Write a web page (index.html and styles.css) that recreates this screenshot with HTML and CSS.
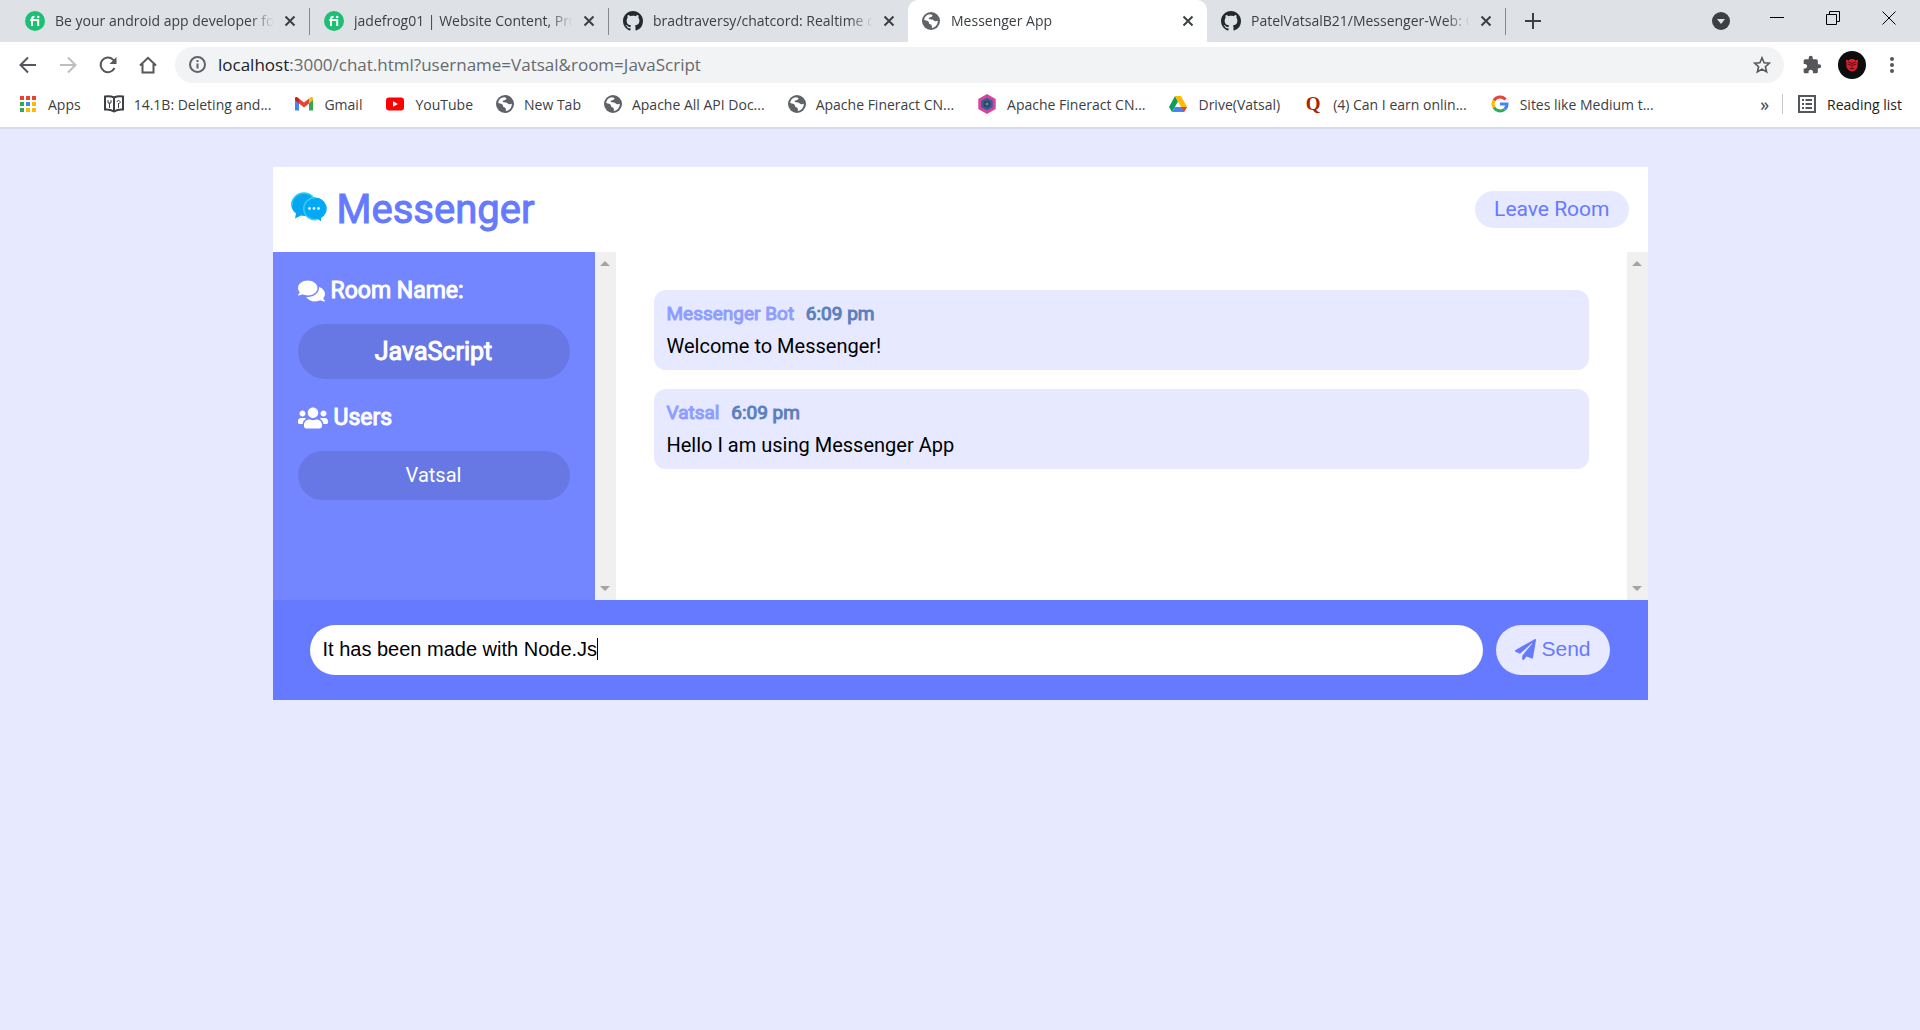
FILE: index.html
```html
<!DOCTYPE html>
<html lang="en">
<head>
<meta charset="utf-8">
<meta name="viewport" content="width=device-width, initial-scale=1">
<title>Messenger App</title>
<link rel="stylesheet" href="styles.css">
</head>
<body>
<svg class="sprite" aria-hidden="true">
  <symbol id="x" viewBox="0 0 12 12"><path d="M1.5 1.5l9 9M10.5 1.5l-9 9" fill="none" stroke="#3c4043" stroke-width="2"/></symbol>
  <symbol id="fiverr" viewBox="0 0 20 20"><circle cx="10" cy="10" r="10" fill="#1dbf73"/><path d="M7 15V8.200Q7 5.800 9.500 5.800M5.200 9h8V15" fill="none" stroke="#fff" stroke-width="2"/><circle cx="13.200" cy="6" r="1.300" fill="#fff"/></symbol>
  <symbol id="github" viewBox="0 0 16 16"><path fill="#24292e" d="M8 0C3.580 0 0 3.580 0 8c0 3.540 2.290 6.530 5.470 7.590.4.070.55-.17.55-.38 0-.19-.01-.82-.01-1.490-2.010.37-2.530-.49-2.690-.94-.09-.23-.48-.94-.82-1.130-.28-.15-.68-.52-.01-.53.63-.01 1.080.58 1.230.82.72 1.210 1.870.87 2.330.66.07-.52.28-.87.51-1.070-1.780-.2-3.640-.89-3.640-3.950 0-.87.31-1.590.82-2.150-.08-.2-.36-1.020.08-2.120 0 0 .67-.21 2.200.82.64-.18 1.320-.27 2-.27s1.360.09 2 .27c1.530-1.040 2.200-.82 2.200-.82.44 1.100.16 1.920.08 2.120.51.56.82 1.270.82 2.150 0 3.070-1.870 3.750-3.650 3.950.29.25.54.73.54 1.480 0 1.070-.01 1.930-.01 2.200 0 .21.15.46.55.38A8.010 8.010 0 0016 8c0-4.420-3.580-8-8-8z"/></symbol>
  <symbol id="globe" viewBox="0 0 18 18"><circle cx="9" cy="9" r="9" fill="#5f6368"/><path d="M8 2.200c3 .3 3 1.800 1.500 2.600-1.400.8-2.800.3-2.800 1.700 0 1.200 2.600.5 3.900 1.200 1.700.9 2.400 2.300 5.200 1.100C15.900 13 13 15.800 9.800 16c.3-1.400.2-3.200-1.500-3.700-1.900-.4-.8-2-2.200-3C4.900 8.500 3 9 2.100 7.600 2.800 4.400 5 2.300 8 2.200z" fill="#fff"/></symbol>
</svg>

<header class="browser">
  <div class="tabs">
    <div class="tab"><svg class="fav"><use href="#fiverr"/></svg><span class="title">Be your android app developer fo</span><button class="close" aria-label="Close tab"><svg><use href="#x"/></svg></button></div>
    <div class="tab"><svg class="fav"><use href="#fiverr"/></svg><span class="title">jadefrog01 | Website Content, Pro</span><button class="close" aria-label="Close tab"><svg><use href="#x"/></svg></button></div>
    <div class="tab plain"><svg class="fav"><use href="#github"/></svg><span class="title">bradtraversy/chatcord: Realtime c</span><button class="close" aria-label="Close tab"><svg><use href="#x"/></svg></button></div>
    <div class="tab active"><svg class="fav small"><use href="#globe"/></svg><span class="title">Messenger App</span><button class="close" aria-label="Close tab"><svg><use href="#x"/></svg></button></div>
    <div class="tab"><svg class="fav"><use href="#github"/></svg><span class="title">PatelVatsalB21/Messenger-Web: C</span><button class="close" aria-label="Close tab"><svg><use href="#x"/></svg></button></div>
    <button class="newtab" aria-label="New tab"><svg viewBox="0 0 16 16"><path d="M8 0v16M0 8h16" stroke="#3c4043" stroke-width="2"/></svg></button>
    <div class="window">
      <button aria-label="Search tabs"><svg viewBox="0 0 18 18"><circle cx="9" cy="9" r="9" fill="#3c4043"/><path d="M5 7h8l-4 5z" fill="#dee1e6"/></svg></button>
      <button class="sys" aria-label="Minimize"><svg viewBox="0 0 14 14"><path d="M0 6.500h14" stroke="#000"/></svg></button>
      <button class="sys" aria-label="Restore"><svg viewBox="0 0 14 14"><path d="M.5 3.500h10v10H.5zM3.500 3V.5h10v10H11" fill="none" stroke="#000"/></svg></button>
      <button class="sys" aria-label="Close"><svg viewBox="0 0 14 14"><path d="M.5.5l13 13M13.500.5l-13 13" stroke="#000"/></svg></button>
    </div>
  </div>

  <div class="toolbar">
    <button aria-label="Back"><svg viewBox="0 0 18 18"><path d="M17 9H2M9 1.500L1.500 9 9 16.500" fill="none" stroke="#54575b" stroke-width="2"/></svg></button>
    <button aria-label="Forward"><svg viewBox="0 0 18 18"><path d="M1 9h15M9 1.500L16.500 9 9 16.500" fill="none" stroke="#bbbdc0" stroke-width="2"/></svg></button>
    <button aria-label="Reload"><svg viewBox="0 0 18 18"><path d="M15.500 12A7.300 7.300 0 1 1 14 3.600L16 5.600" fill="none" stroke="#54575b" stroke-width="2"/><path d="M17.500 1v7h-7z" fill="#54575b"/></svg></button>
    <button aria-label="Home"><svg viewBox="0 0 18 18"><path d="M1 9.500L9 1.800l8 7.700M3.500 8v8.500h11V8" fill="none" stroke="#54575b" stroke-width="2"/></svg></button>
    <div class="omnibox">
      <svg class="info" viewBox="0 0 17 17"><circle cx="8.500" cy="8.500" r="7.500" fill="none" stroke="#5f6368" stroke-width="2"/><path d="M8.500 7.500v5M8.500 4v2" stroke="#5f6368" stroke-width="2"/></svg>
      <div class="url">localhost<span>:3000/chat.html?username=Vatsal&amp;room=JavaScript</span></div>
      <button aria-label="Bookmark this page"><svg viewBox="0 0 18 18"><path d="M9 1.800l2.100 4.900 5.300.5-4 3.500 1.200 5.200L9 13.100l-4.600 2.800 1.200-5.200-4-3.500 5.300-.5z" fill="none" stroke="#54575b" stroke-width="1.600"/></svg></button>
    </div>
    <div class="right">
      <button aria-label="Extensions"><svg viewBox="0 0 24 24"><path d="M20.500 11H19V7c0-1.100-.9-2-2-2h-4V3.500a2.500 2.500 0 00-5 0V5H4c-1.100 0-1.990.9-1.990 2v3.800H3.500c1.490 0 2.700 1.210 2.700 2.700s-1.210 2.700-2.700 2.700H2V20c0 1.100.9 2 2 2h3.800v-1.500c0-1.490 1.210-2.700 2.700-2.700s2.700 1.210 2.700 2.700V22H17c1.100 0 2-.9 2-2v-4h1.500a2.500 2.500 0 000-5z" fill="#54575b"/></svg></button>
      <button class="avatar" aria-label="Profile"><svg viewBox="0 0 28 28"><circle cx="14" cy="14" r="14" fill="#0d0d10"/><path d="M8 8.500l2.500 1L12.500 8h3l2 1.500 2.500-1-.5 8-2.500 3L14 20.500 11 19.500 8.500 16.500z" fill="#d91f2b"/><path d="M9.500 13l3.500 1.200M18.500 13L15 14.200M12 17.500h4M10 11l4 1.500 4-1.500M14 12.500v4" fill="none" stroke="#4d0d12" stroke-width=".9"/></svg></button>
      <button class="menu" aria-label="Menu"><svg viewBox="0 0 4 16"><circle cx="2" cy="2" r="2"/><circle cx="2" cy="8" r="2"/><circle cx="2" cy="14" r="2"/></svg></button>
    </div>
  </div>

  <nav class="bookmarks">
    <a href="#"><svg viewBox="0 0 20 20"><path d="M2 2h4v4H2zM8 2h4v4H8zM14 2h4v4h-4z" fill="#ea4335"/><path d="M2 8h4v4H2zM2 14h4v4H2z" fill="#34a853"/><path d="M8 8h4v4H8z" fill="#4285f4"/><path d="M14 8h4v4h-4zM8 14h4v4H8zM14 14h4v4h-4z" fill="#fbbc04"/></svg>Apps</a>
    <a href="#"><svg viewBox="0 0 20 20"><path d="M1 2.500q5-1 9 1Q14 1.500 19 2.500v13q-5-.5-9 2-4-2.500-9-2zM10 4v14" fill="#fff" stroke="#3c4043" stroke-width="2"/><path d="M5.500 14V9M4 6v3h3V6M14.500 14V9m-1.500-1a1.600 1.600 0 112.500 1.500" fill="none" stroke="#3c4043"/></svg>14.1B: Deleting and...</a>
    <a href="#"><svg viewBox="0 0 20 20"><path d="M1 5v11.500h4V9z" fill="#4285f4"/><path d="M19 5v11.500h-4V9z" fill="#34a853"/><path d="M5 4.500l5 4 5-4V9.500l-5 4-5-4z" fill="#ea4335"/><path d="M1 6V4.500c0-2 2-2 4 0v5z" fill="#c5221f"/><path d="M19 6V4.500c0-2-2-2-4 0v5z" fill="#fbbc04"/></svg>Gmail</a>
    <a href="#"><svg viewBox="0 0 20 20"><rect x="1" y="3.500" width="18" height="13" rx="3" fill="#f00"/><path d="M8 7.200v5.600l5-2.800z" fill="#fff"/></svg>YouTube</a>
    <a href="#"><svg class="g"><use href="#globe"/></svg>New Tab</a>
    <a href="#"><svg class="g"><use href="#globe"/></svg>Apache All API Doc...</a>
    <a href="#"><svg class="g"><use href="#globe"/></svg>Apache Fineract CN...</a>
    <a href="#"><svg viewBox="0 0 20 20"><path d="M10 0l8.700 5v10L10 20l-8.700-5V5z" fill="#d6459b"/><path d="M10 3.500l5.700 3.200v6.600L10 16.500l-5.700-3.200V6.700z" fill="#3d5a93"/><circle cx="10" cy="10" r="3.500" fill="#22477a"/><circle cx="10" cy="10" r="1.500" fill="#7d8a4d"/></svg>Apache Fineract CN...</a>
    <a href="#"><svg viewBox="0 0 20 20"><path d="M7 2L1 13l3 5L10 7.500z" fill="#0f9d58"/><path d="M7 2h6l6 11h-6z" fill="#fbbc04"/><path d="M4 18l3-5h12l-3 5z" fill="#4285f4"/><path d="M13 13h6l-3 5z" fill="#ea4335"/></svg>Drive(Vatsal)</a>
    <a href="#"><span class="quora">Q</span>(4) Can I earn onlin...</a>
    <a href="#"><svg viewBox="0 0 20 20" fill="none" stroke-width="3"><path d="M15.500 5.500A7 7 0 004 6.500" stroke="#ea4335"/><path d="M4 6.500a7 7 0 000 7" stroke="#fbbc04"/><path d="M4 13.500a7 7 0 0010.500 1.800" stroke="#34a853"/><path d="M14.500 15.300A6.500 6.500 0 0017 10H10" stroke="#4285f4"/></svg>Sites like Medium t...</a>
    <button class="more" aria-label="More bookmarks">»</button>
    <a class="reading" href="#"><svg viewBox="0 0 20 20"><rect x="2" y="2" width="16" height="16" fill="none" stroke="#54575b" stroke-width="2"/><path d="M5 6h2M5 10h2M5 14h2M8.500 6H15M8.500 10H15M8.500 14H15" stroke="#54575b" stroke-width="2"/></svg>Reading list</a>
  </nav>
</header>

<main class="chat">
  <header class="chat-header">
    <h1><svg viewBox="0 0 36 36"><path d="M13 1a12.500 11.500 0 00-8 20.500L4 26.500l6-3a12 11.500 0 0015-10A12 11.500 0 0013 1z" fill="#0aa5ef"/><path d="M1 14A12 11.500 0 0122 5" fill="none" stroke="#25d0f5" stroke-width="1.500"/><path d="M24 5.500a11.500 11 0 00-1 22q2 .3 4-.2l3 2v-3.300A11.500 11 0 0024 5.500z" fill="#03a9f4"/><path d="M25.500 27.500A11 11 0 0112.800 17 11 11 0 0124 5.800" fill="none" stroke="#35cdf5" stroke-width="1.500"/><circle cx="18.500" cy="16.500" r="1.400" fill="#d9f1ff"/><circle cx="23" cy="16.500" r="1.400" fill="#d9f1ff"/><circle cx="27.500" cy="16.500" r="1.400" fill="#d9f1ff"/></svg>Messenger</h1>
    <a class="leave" href="#">Leave Room</a>
  </header>
  <div class="chat-main">
    <aside class="sidebar">
      <h3><svg class="i-comments" viewBox="0 0 576 512"><path fill="currentColor" d="M416 192c0-88.400-93.100-160-208-160S0 103.600 0 192c0 34.300 14.100 65.900 38 92-13.400 30.200-35.500 54.200-35.800 54.500-2.200 2.300-2.800 5.700-1.500 8.700S4.800 352 8 352c36.600 0 66.900-12.300 88.700-25 32.200 15.700 70.300 25 111.300 25 114.900 0 208-71.600 208-160zm122 220c23.900-26 38-57.700 38-92 0-66.900-53.500-124.200-129.300-148.100.9 6.600 1.300 13.300 1.300 20.100 0 105.900-107.700 192-240 192-10.800 0-21.300-.8-31.700-1.900C207.800 439.600 281.800 480 368 480c41 0 79.100-9.200 111.300-25 21.800 12.700 52.100 25 88.700 25 3.200 0 6.100-1.900 7.300-4.800 1.300-2.900.7-6.300-1.500-8.700-.3-.3-22.400-24.200-35.800-54.500z"/></svg> Room Name:</h3>
      <h2>JavaScript</h2>
      <h3><svg class="i-users" viewBox="0 0 640 512"><path fill="currentColor" d="M96 224c35.300 0 64-28.700 64-64s-28.700-64-64-64-64 28.700-64 64 28.700 64 64 64zm448 0c35.300 0 64-28.700 64-64s-28.700-64-64-64-64 28.700-64 64 28.700 64 64 64zm32 32h-64c-17.600 0-33.500 7.100-45.100 18.600 40.300 22.100 68.900 62 75.100 109.400h66c17.700 0 32-14.300 32-32v-32c0-35.300-28.700-64-64-64zm-256 0c61.900 0 112-50.100 112-112S381.900 32 320 32 208 82.100 208 144s50.100 112 112 112zm76.800 32h-8.300c-20.800 10-43.900 16-68.500 16s-47.600-6-68.500-16h-8.300C179.600 288 128 339.600 128 403.200V432c0 26.500 21.500 48 48 48h288c26.500 0 48-21.500 48-48v-28.800c0-63.600-51.600-115.200-115.200-115.200zm-223.700-13.400C161.500 263.100 145.600 256 128 256H64c-35.300 0-64 28.700-64 64v32c0 17.700 14.300 32 32 32h65.900c6.300-47.400 34.900-87.300 75.200-109.400z"/></svg> Users</h3>
      <ul><li>Vatsal</li></ul>
    </aside>
    <div class="scroll" aria-hidden="true"><i class="up"></i><i class="down"></i></div>
    <section class="messages">
      <article class="message"><p class="meta">Messenger Bot <span>6:09 pm</span></p><p>Welcome to Messenger!</p></article>
      <article class="message"><p class="meta">Vatsal <span>6:09 pm</span></p><p>Hello I am using Messenger App</p></article>
    </section>
    <div class="scroll" aria-hidden="true"><i class="up"></i><i class="down"></i></div>
  </div>
  <form class="composer">
    <input type="text" aria-label="Message" value="It has been made with Node.Js" autocomplete="off">
    <button type="button"><svg viewBox="0 0 512 512"><path fill="currentColor" d="M476 3.200L12.500 270.600c-18.100 10.400-15.800 35.600 2.200 43.200L121 358.400l287.300-253.200c5.500-4.900 13.300 2.600 8.600 8.300L176 407v80.500c0 23.600 28.500 32.900 42.500 15.800L282 426l124.600 52.200c14.200 6 30.400-2.900 33-18.200l72-432C515 7.800 493.300-6.800 476 3.200z"/></svg> Send</button>
  </form>
</main>
</body>
</html>
```
FILE: styles.css
```css
* { box-sizing: border-box; margin: 0; padding: 0; }
body { background: #e6e9ff; font-family: Roboto, sans-serif; font-size: 20px; color: #000; }
button { border: 0; background: none; font: inherit; color: inherit; display: flex; align-items: center; justify-content: center; }
a { color: inherit; text-decoration: none; }
svg { display: block; flex: none; }
.sprite { position: absolute; width: 0; height: 0; }

/* Browser frame */
.browser { background: #fff; font-family: "Open Sans", sans-serif; font-size: 14px; color: #3c4043; border-bottom: 2px solid #d8dce3; }
.tabs { display: flex; height: 42px; padding: 0 3px 0 11px; background: #dee1e6; }
.tab { flex: 0 1 299px; min-width: 0; display: flex; align-items: center; gap: 10px; padding: 0 13px 0 14px; border-right: 1px solid #85888d; border-image: linear-gradient(transparent 9px, #85888d 9px, #85888d 34px, transparent 34px) 1; }
.tab.plain { border: 0; }
.tab.active { background: #fff; border: 0; border-radius: 10px 10px 0 0; }
.tab.active .title { margin-left: 1px; }
.fav { width: 20px; height: 20px; }
.fav.small { width: 18px; height: 18px; }
.title { flex: 1; overflow: hidden; padding-bottom: 2px; white-space: nowrap; mask-image: linear-gradient(90deg, #000 calc(100% - 24px), transparent); }
.close svg { width: 12px; height: 12px; }
.newtab { width: 54px; }
.newtab svg { width: 16px; height: 16px; }
.window { margin-left: auto; display: flex; }
.window button { width: 56px; }
.window svg { width: 18px; height: 18px; }
.window .sys { height: 36px; }
.window .sys svg { width: 14px; height: 14px; }

.toolbar { display: flex; align-items: center; height: 45px; padding: 0 8px; }
.toolbar > button { width: 40px; }
.toolbar button svg { width: 18px; height: 18px; }
.omnibox { flex: 1; display: flex; align-items: center; height: 36px; margin-left: 7px; padding: 0 13px 0 14px; border-radius: 18px; background: #f1f3f4; }
.info { width: 17px; height: 17px; }
.url { flex: 1; margin-left: 12px; font-size: 17px; color: #202124; }
.url span { color: #666a6e; }
.right { display: flex; align-items: center; margin-left: 8px; }
.right button { width: 40px; }
.right button svg { width: 20px; height: 20px; }
.right .avatar svg { width: 28px; height: 28px; }
.right .menu svg { width: 4px; height: 16px; fill: #54575b; }

.bookmarks { display: flex; align-items: center; gap: 23px; height: 40px; padding: 0 18px 6px; white-space: nowrap; }
.bookmarks a { display: flex; align-items: center; gap: 10px; }
.bookmarks svg { width: 20px; height: 20px; }
.bookmarks svg.g { width: 18px; height: 18px; }
.quora { width: 20px; text-align: center; font: bold 19px/20px "Liberation Serif", serif; color: #a82400; }
.more { margin-left: auto; margin-right: -10px; font-size: 18px; }
.reading { padding-left: 14px; border-left: 1px solid #c4c7cb; color: #202124; }

/* Chat application */
.chat { max-width: 1375px; margin: 38px auto 0; }
.chat-header { display: flex; align-items: center; justify-content: space-between; height: 85px; padding: 0 19px 0 18px; background: #fff; color: #667aff; }
h1 { display: flex; align-items: center; gap: 10px; font-size: 40px; font-weight: 400; -webkit-text-stroke: 1px; }
h1 svg { width: 36px; height: 36px; }
.leave { padding: 0 19px; border-radius: 19px; background: #e6e9ff; font-size: 21px; line-height: 37px; }
.chat-main { display: flex; height: 348px; }
.sidebar { flex: 0 0 322px; padding: 25px; background: #7386ff; color: #fff; }
.sidebar h3, .sidebar h2 { font-weight: 400; -webkit-text-stroke: 1px; }
.sidebar h3 { display: flex; align-items: center; gap: 6px; font-size: 23px; line-height: 28px; }
.sidebar h2, .sidebar li { margin: 19px 0 25px; border-radius: 28px; background: rgba(0, 0, 0, .1); text-align: center; list-style: none; }
.sidebar h2 { font-size: 25px; line-height: 55px; }
.sidebar li { line-height: 49px; }
.i-comments { width: 27px; height: 24px; }
.i-users { width: 30px; height: 24px; }
.scroll { flex: 0 0 21px; display: flex; flex-direction: column; justify-content: space-between; align-items: center; padding: 9px 0; background: #f0f0f0; }
.scroll i { border: 5px solid transparent; border-top-width: 0; border-bottom-width: 0; }
.scroll .up { border-bottom: 5px solid #a3a3a3; }
.scroll .down { border-top: 5px solid #a3a3a3; }
.messages { flex: 1; padding: 38px; background: #fff; }
.message { margin-bottom: 19px; padding: 12px 13px 8px; border-radius: 12px; background: #e6e9ff; line-height: 32px; }
.meta { margin-bottom: 4px; font-size: 19px; line-height: 24px; color: #8f9dff; -webkit-text-stroke: 1px; }
.meta span { margin-left: 7px; color: #5b7fc1; }
.composer { display: flex; gap: 13px; padding: 25px 38px 25px 37px; background: #667aff; }
.composer input, .composer button { height: 50px; border: 0; border-radius: 25px; font-family: "Liberation Sans", Arial, sans-serif; }
/* The text cursor is drawn as a thin background bar after the draft */
.composer input { flex: 1; min-width: 0; padding: 0 13px 2px; font-size: 20px; outline: 0; background: #fff linear-gradient(#000, #000) no-repeat 287px 13px / 1px 22px; }
.composer button { gap: 5px; padding: 0 19px 2px; font-size: 21px; background: #e6e9ff; color: #667aff; }
.composer svg { width: 21px; height: 21px; }
```
